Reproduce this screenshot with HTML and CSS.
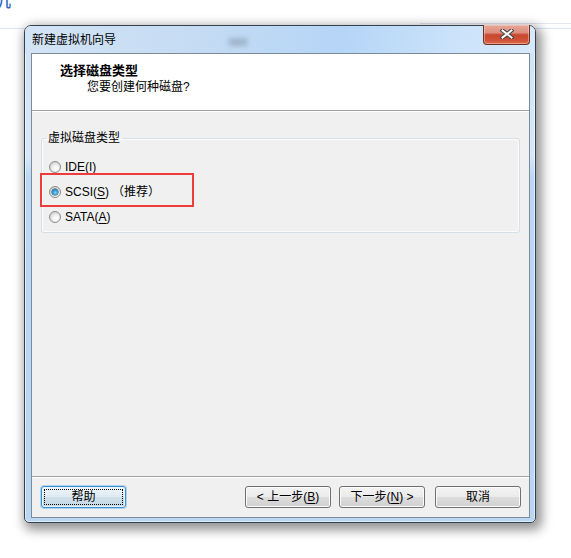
FILE: index.html
```html
<!DOCTYPE html>
<html lang="zh-CN">
<head>
<meta charset="utf-8">
<title>新建虚拟机向导</title>
<link rel="stylesheet" href="styles.css">
</head>
<body>
<div class="crumb"><span class="crumb-text">机</span></div>
<div class="window">
  <div class="titlebar">
    <span class="title">新建虚拟机向导</span>
    <span class="glassblur"></span>
    <button class="close" aria-label="关闭">
      <svg width="14" height="10" viewBox="0 0 14 10">
        <path d="M2.5 1.5 L11.5 8.5 M11.5 1.5 L2.5 8.5" stroke="#3b3f44" stroke-width="4" stroke-linecap="square" fill="none"/>
        <path d="M2.5 1.5 L11.5 8.5 M11.5 1.5 L2.5 8.5" stroke="#ffffff" stroke-width="2" stroke-linecap="square" fill="none"/>
      </svg>
    </button>
  </div>
  <div class="client">
    <div class="header">
      <div class="h-title">选择磁盘类型</div>
      <div class="h-sub">您要创建何种磁盘?</div>
    </div>
    <div class="body">
      <fieldset class="group">
        <legend>虚拟磁盘类型</legend>
        <div class="opt"><span class="radio"></span><span class="lat">IDE(<u>I</u>)</span></div>
        <div class="opt"><span class="radio on"></span><span class="lat">SCSI(<u>S</u>)</span><span class="rec">（推荐）</span><span class="mark"></span></div>
        <div class="opt"><span class="radio"></span><span class="lat">SATA(<u>A</u>)</span></div>
      </fieldset>
    </div>
    <div class="footer">
      <button class="btn default"><span>帮助</span></button>
      <span class="spacer"></span>
      <button class="btn">&lt; 上一步(<u>B</u>)</button>
      <button class="btn next">下一步(<u>N</u>) &gt;</button>
      <button class="btn cancel">取消</button>
    </div>
  </div>
</div>
</body>
</html>
```
FILE: styles.css
```css
html, body {
  margin: 0;
  padding: 0;
}
body {
  width: 571px;
  height: 558px;
  overflow: hidden;
  font-family: "Liberation Sans", "Noto Sans CJK SC", sans-serif;
  font-size: 12px;
  color: #000;
  background:
    linear-gradient(#dce5ee, #dce5ee) 0 28px / 100% 1px no-repeat,
    linear-gradient(#e2e8ee, #e2e8ee) 420px 23px / 100% 1px no-repeat,
    #ffffff;
}
.crumb {
  height: 25px;
  overflow: hidden;
}
.crumb-text {
  display: block;
  font-size: 20px;
  line-height: 20px;
  margin-top: -10px;
  margin-left: -9px;
  color: #2b64c6;
}
.window {
  margin-left: 24px;
  width: 512px;
  height: 498px;
  box-sizing: border-box;
  border: 1px solid #34414e;
  border-radius: 7px 7px 5px 5px;
  padding: 0 5px 4px 6px;
  display: flex;
  flex-direction: column;
  background: linear-gradient(to bottom, #cfe2f6 0, #d8e8f9 130px, #bad8f6 150px, #b9d6f2 100%);
  box-shadow: 3px 4px 11px 3px rgba(0, 0, 0, 0.42), inset 0 0 0 1px rgba(255, 255, 255, 0.55);
}
.titlebar {
  height: 27px;
  display: flex;
  align-items: flex-start;
  margin: 0 -5px 0 -6px;
  padding: 0 5px 0 6px;
  border-radius: 6px 6px 0 0;
  background: linear-gradient(100deg, #d3e4f5 0%, #c4dbf3 35%, #b5d5f7 62%, #cce3fa 85%, #d8e9fb 100%);
}
.title {
  margin-top: 6px;
  padding-left: 1px;
  line-height: 16px;
  white-space: nowrap;
}
.glassblur {
  width: 20px;
  height: 8px;
  margin: 12px 0 0 112px;
  border-radius: 4px;
  background: rgba(100, 114, 128, 0.35);
  filter: blur(2.5px);
}
.close {
  margin-left: auto;
  margin-top: -1px;
  width: 47px;
  height: 20px;
  padding: 0;
  border: 1px solid #6b3127;
  border-top: none;
  border-radius: 0 0 4px 4px;
  background: linear-gradient(to bottom, #e7a696 0%, #dd8f7e 40%, #c8472f 52%, #cf5238 80%, #df6a4b 100%);
  box-shadow: inset 0 0 0 1px rgba(255, 220, 210, 0.45);
  display: flex;
  align-items: center;
  justify-content: center;
}
.close svg {
  display: block;
  margin-top: -1px;
}
.client {
  flex: 1;
  display: flex;
  flex-direction: column;
  border: 1px solid #7d8a98;
  background: #f0f0f0;
  min-height: 0;
}
.header {
  height: 57px;
  box-sizing: border-box;
  padding-top: 9px;
  background: #ffffff;
  border-bottom: 1px solid #a0a0a0;
}
.h-title {
  padding-left: 28px;
  font-size: 13px;
  font-weight: bold;
  line-height: 16px;
}
.h-sub {
  padding-left: 55px;
  line-height: 16px;
}
.body {
  flex: 1;
  border-top: 1px solid #ffffff;
  border-bottom: 1px solid #a0a0a0;
}
.group {
  margin: 19px 9px 0 9px;
  padding: 9px 7px 3px 7px;
  border: 1px solid #d5dfe5;
  border-radius: 3px;
  min-width: 0;
  box-shadow: inset 0 0 0 1px rgba(255, 255, 255, 0.7);
}
.group legend {
  padding: 0 2px;
  margin-left: -3px;
  line-height: 14px;
}
.opt {
  position: relative;
  height: 25px;
  display: flex;
  align-items: center;
  line-height: 16px;
}
.lat u, .btn u {
  text-decoration: underline;
  text-underline-offset: 2px;
}
.radio {
  width: 12px;
  height: 12px;
  box-sizing: border-box;
  border-radius: 50%;
  border: 1px solid #8b8b8b;
  background: radial-gradient(circle at 60% 65%, #ffffff 0%, #f2f2f2 35%, #d2d2d2 75%, #c4c4c4 100%);
  margin-right: 4px;
  display: flex;
  align-items: center;
  justify-content: center;
  flex: none;
}
.radio.on::after {
  content: "";
  width: 6px;
  height: 6px;
  border-radius: 50%;
  background: radial-gradient(circle at 55% 60%, #7fdcff 0%, #2f9ad6 45%, #124f80 100%);
  box-shadow: 0 0 0 0.5px #0f3f66;
}
.rec {
  margin-left: 3px;
}
.mark {
  position: absolute;
  left: -9px;
  top: -6px;
  width: 154px;
  height: 34px;
  box-sizing: border-box;
  border: 2px solid #ee3b3b;
  pointer-events: none;
}
.footer {
  height: 40px;
  box-sizing: border-box;
  border-top: 1px solid #ffffff;
  padding: 8px 8px 0 9px;
  display: flex;
  align-items: flex-start;
}
.spacer {
  flex: 1;
}
.btn {
  width: 86px;
  height: 22px;
  padding: 0;
  box-sizing: border-box;
  font-family: "Liberation Sans", "Noto Sans CJK SC", sans-serif;
  font-size: 12px;
  line-height: 18px;
  color: #000;
  border: 1px solid #707070;
  border-radius: 3px;
  background: linear-gradient(to bottom, #f3f3f3 0%, #ebebeb 50%, #dddddd 50%, #d0d0d0 100%);
  box-shadow: inset 0 0 0 1px #fbfbfb;
  white-space: nowrap;
}
.btn.default {
  width: 85px;
  border-color: #3c8fce;
  background: linear-gradient(to bottom, #edf5fa 0%, #dfeaf1 50%, #cfe0ea 50%, #c2d7e4 100%);
  box-shadow: 0 0 0 1px rgba(90, 180, 235, 0.45), inset 0 0 0 1px #e9f5fc;
  outline: 1px dotted #000;
  outline-offset: -4px;
}
.btn.next {
  margin-left: 8px;
}
.btn.cancel {
  margin-left: 10px;
}
```
